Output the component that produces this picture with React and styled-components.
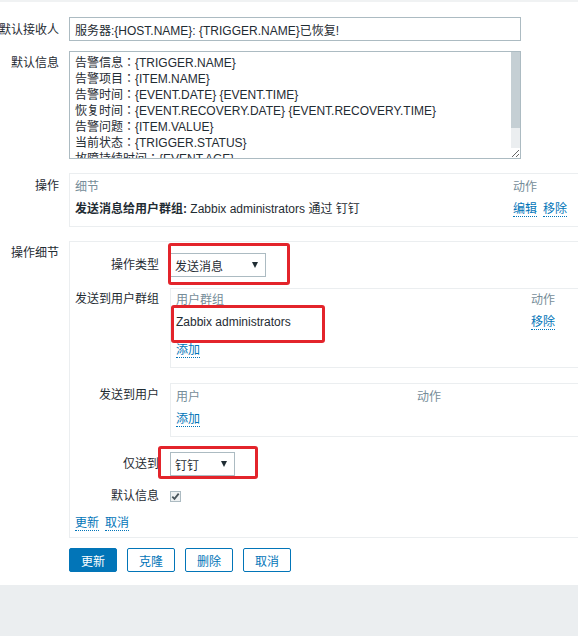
import styled, { createGlobalStyle } from "styled-components";

const GlobalStyle = createGlobalStyle`
  html, body {
    margin: 0;
    padding: 0;
    overflow: hidden;
  }
  body {
    background: #ebeef0;
    font-family: "Liberation Sans", "Noto Sans CJK SC", sans-serif;
    font-size: 12px;
    color: #1f2c33;
  }
`;

const Page = styled.div`
  background: #fff;
  border-top: 2px solid #f0f2f3;
  padding: 15px 0 13px;
`;

const FormRow = styled.div`
  display: grid;
  grid-template-columns: ${(p) => p.$label}px 1fr;
  column-gap: ${(p) => p.$gap}px;
  margin-top: ${(p) => p.$mt || 0}px;
`;

const Label = styled.div`
  display: flex;
  justify-content: flex-end;
  white-space: nowrap;
  padding-top: ${(p) => p.$pt ?? 5}px;
  line-height: 14px;
`;

const TextInput = styled.input`
  width: 452px;
  height: 24px;
  box-sizing: border-box;
  border: 1px solid #acbbc2;
  padding: 0 5px;
  font: inherit;
  color: #1f2c33;
  outline: none;
`;

const AreaWrap = styled.div`
  position: relative;
  width: 452px;
`;

const TextArea = styled.textarea`
  display: block;
  width: 452px;
  height: 108px;
  box-sizing: border-box;
  border: 1px solid #acbbc2;
  padding: 3px 14px 3px 5px;
  font-family: "Liberation Sans", "Noto Sans CJK JP", sans-serif;
  font-size: 12px;
  line-height: 16px;
  color: #1f2c33;
  resize: vertical;
  outline: none;
  overflow: hidden;
`;

const ScrollTrack = styled.div`
  position: absolute;
  top: 1px;
  right: 1px;
  width: 9px;
  height: 96px;
  background: #ebeef0;
`;

const ScrollThumb = styled.div`
  height: 76px;
  background: #c5cfd4;
`;

const Box = styled.div`
  border: 1px solid #ebeef0;
  background: #fff;
  width: ${(p) => (p.$w ? `${p.$w}px` : "auto")};
  padding: ${(p) => p.$pad};
`;

const TRow = styled.div`
  display: grid;
  grid-template-columns: ${(p) => p.$cols} 1fr;
  padding: 0 5px;
  margin-top: ${(p) => p.$mt}px;
  line-height: 14px;
  height: 14px;
  white-space: nowrap;
  color: ${(p) => (p.$head ? "#768d99" : "#1f2c33")};
`;

const Links = styled.div`
  display: flex;
  gap: 6px;
  height: 14px;
`;

const Link = styled.a`
  color: #0275b8;
  text-decoration: none;
  border-bottom: 1px dotted #0275b8;
  line-height: 14px;
  height: 14px;
  cursor: pointer;
`;

const Marked = styled.div`
  position: relative;
  width: fit-content;
`;

const Mark = styled.span`
  position: absolute;
  top: ${(p) => p.$top}px;
  left: ${(p) => p.$left}px;
  width: ${(p) => p.$w}px;
  height: ${(p) => p.$h}px;
  box-sizing: border-box;
  border: 3px solid #e3242b;
  border-radius: 3px;
  pointer-events: none;
`;

const Select = styled.div`
  display: flex;
  align-items: center;
  justify-content: space-between;
  width: ${(p) => p.$w}px;
  height: 24px;
  box-sizing: border-box;
  border: 1px solid #acbbc2;
  padding: 0 7px 0 4px;
  background: #fff;
`;

const Arrow = styled.span`
  width: 0;
  height: 0;
  border-left: 3.5px solid transparent;
  border-right: 3.5px solid transparent;
  border-top: 6px solid #1f2c33;
`;

const CheckCell = styled.div`
  display: flex;
  align-items: center;
  height: 24px;
`;

const Check = styled.span`
  display: inline-flex;
  align-items: center;
  justify-content: center;
  width: 11px;
  height: 11px;
  box-sizing: border-box;
  border: 1px solid #acbbc2;
  background: #eef1f2;
`;

const ButtonBar = styled.div`
  display: flex;
  gap: 10px;
  padding-left: 69px;
  margin-top: 10px;
`;

const Button = styled.button`
  width: 48px;
  height: 24px;
  box-sizing: border-box;
  border: 1px solid #0275b8;
  border-radius: 2px;
  background: ${(p) => (p.$primary ? "#0275b8" : "#fff")};
  color: ${(p) => (p.$primary ? "#fff" : "#0275b8")};
  font: inherit;
  padding: 0;
`;

const message = [
  "告警信息：{TRIGGER.NAME}",
  "告警项目：{ITEM.NAME}",
  "告警时间：{EVENT.DATE} {EVENT.TIME}",
  "恢复时间：{EVENT.RECOVERY.DATE} {EVENT.RECOVERY.TIME}",
  "告警问题：{ITEM.VALUE}",
  "当前状态：{TRIGGER.STATUS}",
  "故障持续时间：{EVENT.AGE}",
  "事件ID：{EVENT.ID}",
].join("\n");

const App = () => (
  <Page>
    <GlobalStyle />

    <FormRow $label={59} $gap={10}>
      <Label $pt={6}>默认接收人</Label>
      <div>
        <TextInput readOnly value="服务器:{HOST.NAME}: {TRIGGER.NAME}已恢复!" />
      </div>
    </FormRow>

    <FormRow $label={59} $gap={10} $mt={10}>
      <Label>默认信息</Label>
      <AreaWrap>
        <TextArea readOnly value={message} />
        <ScrollTrack>
          <ScrollThumb />
        </ScrollTrack>
      </AreaWrap>
    </FormRow>

    <FormRow $label={59} $gap={10} $mt={14}>
      <Label $pt={6}>操作</Label>
      <Box $w={540} $pad="0 0 10px">
        <TRow $head $cols="438px" $mt={6}>
          <span>细节</span>
          <span>动作</span>
        </TRow>
        <TRow $cols="438px" $mt={8}>
          <span>
            <b>发送消息给用户群组:</b> Zabbix administrators 通过 钉钉
          </span>
          <Links>
            <Link>编辑</Link>
            <Link>移除</Link>
          </Links>
        </TRow>
      </Box>
    </FormRow>

    <FormRow $label={59} $gap={10} $mt={14}>
      <Label>操作细节</Label>
      <Box $w={540} $pad="11px 0 7px">
        <FormRow $label={89} $gap={11}>
          <Label>操作类型</Label>
          <Marked>
            <Select $w={96}>
              <span>发送消息</span>
              <Arrow />
            </Select>
            <Mark $top={-10} $left={-2} $w={122} $h={42} />
          </Marked>
        </FormRow>

        <FormRow $label={89} $gap={11} $mt={11}>
          <Label $pt={4}>发送到用户群组</Label>
          <Box $pad="0 0 10px">
            <TRow $head $cols="355px" $mt={4}>
              <span>用户群组</span>
              <span>动作</span>
            </TRow>
            <TRow $cols="355px" $mt={8}>
              <Marked>
                <span>Zabbix administrators</span>
                <Mark $top={-10} $left={-5} $w={154} $h={38} />
              </Marked>
              <Links>
                <Link>移除</Link>
              </Links>
            </TRow>
            <TRow $cols="355px" $mt={14}>
              <Links>
                <Link>添加</Link>
              </Links>
            </TRow>
          </Box>
        </FormRow>

        <FormRow $label={89} $gap={11} $mt={15}>
          <Label>发送到用户</Label>
          <Box $pad="0 0 10px">
            <TRow $head $cols="241px" $mt={6}>
              <span>用户</span>
              <span>动作</span>
            </TRow>
            <TRow $cols="241px" $mt={8}>
              <Links>
                <Link>添加</Link>
              </Links>
            </TRow>
          </Box>
        </FormRow>

        <FormRow $label={89} $gap={11} $mt={15}>
          <Label>仅送到</Label>
          <Marked>
            <Select $w={65}>
              <span>钉钉</span>
              <Arrow />
            </Select>
            <Mark $top={-6} $left={-12} $w={100} $h={33} />
          </Marked>
        </FormRow>

        <FormRow $label={89} $gap={11} $mt={8}>
          <Label>默认信息</Label>
          <CheckCell>
            <Check>
              <svg width="9" height="9" viewBox="0 0 9 9">
                <path d="M1.3 4.6 L3.5 6.9 L7.7 1.6" stroke="#4a565c" strokeWidth="1.8" fill="none" />
              </svg>
            </Check>
          </CheckCell>
        </FormRow>

        <TRow $cols="auto" $mt={8}>
          <Links>
            <Link>更新</Link>
            <Link>取消</Link>
          </Links>
        </TRow>
      </Box>
    </FormRow>

    <ButtonBar>
      <Button $primary>更新</Button>
      <Button>克隆</Button>
      <Button>删除</Button>
      <Button>取消</Button>
    </ButtonBar>
  </Page>
);

export default App;
